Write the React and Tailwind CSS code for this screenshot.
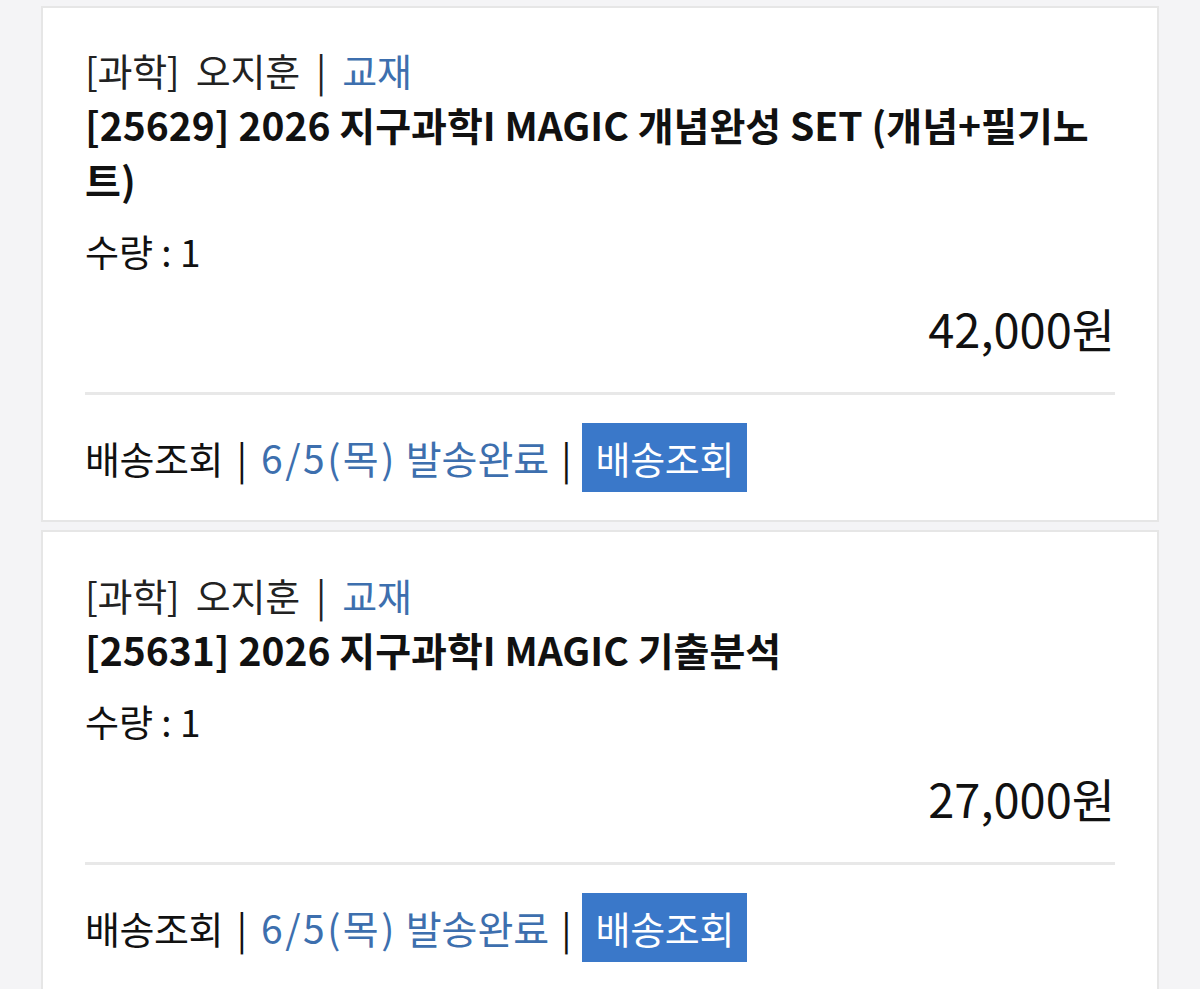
import React from "react";

const font = { fontFamily: '"Noto Sans CJK KR", "Noto Sans", sans-serif' };

function Card({ code, title, price, pt }) {
  return (
    <div className={`bg-white border-2 border-[#e6e6e6] px-[42px] pb-[28px] ${pt}`}>
      <div className="text-[38px] leading-[55px] text-[#222] whitespace-nowrap tracking-[-0.3px]">
        [과학]&nbsp; 오지훈 <span className="mx-[8px]">|</span> <span className="text-[#3d6fae]">교재</span>
      </div>
      <div className="text-[39px] leading-[55px] font-bold text-[#111]">
        [{code}] {title}
      </div>
      <div className="mt-[17px] text-[37px] leading-[55px] text-[#111]">수량&nbsp;:&nbsp;1</div>
      <div className="mt-[21px] text-right text-[47px] leading-[55px] text-[#111]">{price}</div>
      <div className="mt-[37px] h-[3px] bg-[#e8e8e8]" />
      <div className="mt-[28px] flex items-center text-[38px] text-[#111] whitespace-nowrap">
        <span className="tracking-[-0.5px]">배송조회</span>
        <span className="mx-[14px]">|</span>
        <span className="text-[#3d6fae] text-[39px]">
          <span className="tracking-[2.5px]">6/5(목)</span> 발송완료
        </span>
        <span className="ml-[12px] mr-[11px]">|</span>
        <span className="bg-[#3a78c9] text-white h-[69px] px-[13px] flex items-center tracking-[-0.3px]">배송조회</span>
      </div>
    </div>
  );
}

export default function App() {
  return (
    <div className="bg-[#f4f4f6] px-[41px] pt-[6px] flex flex-col gap-[8px] overflow-hidden h-[989px]" style={font}>
      <Card
        pt="pt-[34px]"
        code="25629"
        title={<>2026 지구과학I MAGIC 개념완성 SET (개념+필기노<br />트)</>}
        price="42,000원"
      />
      <Card pt="pt-[35px]" code="25631" title="2026 지구과학I MAGIC 기출분석" price="27,000원" />
    </div>
  );
}
